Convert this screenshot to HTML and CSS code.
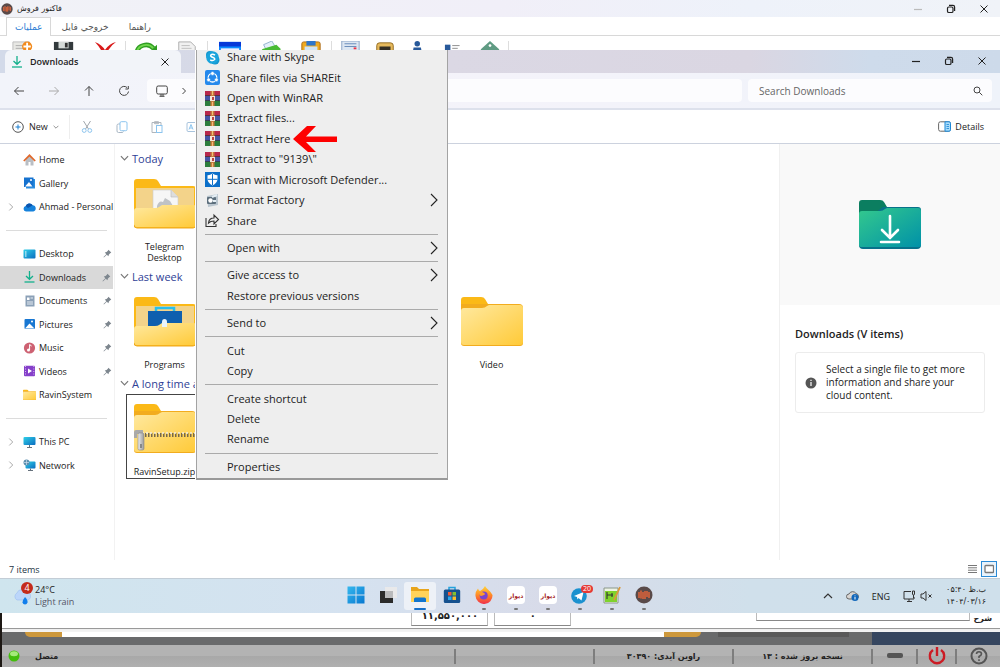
FILE: index.html
```html
<!DOCTYPE html>
<html lang="en">
<head>
<meta charset="utf-8">
<title>Downloads</title>
<link rel="stylesheet" href="styles.css">
</head>
<body>
<svg class="defs" width="0" height="0" aria-hidden="true">
  <defs>
    <linearGradient id="fold" x1="0" y1="0" x2="1" y2="1"><stop offset="0" stop-color="#ffe9a0"/><stop offset="1" stop-color="#ffca38"/></linearGradient>
    <linearGradient id="teal" x1="0" y1="0" x2="1" y2="1"><stop offset="0" stop-color="#34c98d"/><stop offset="1" stop-color="#0091a8"/></linearGradient>
    <linearGradient id="sky" x1="0" y1="0" x2="1" y2="1"><stop offset="0" stop-color="#2fd0e8"/><stop offset="1" stop-color="#0a6cc0"/></linearGradient>
    <linearGradient id="fox" x1="0" y1="0" x2="0" y2="1"><stop offset="0" stop-color="#ffd43a"/><stop offset=".5" stop-color="#ff8a26"/><stop offset="1" stop-color="#f0304c"/></linearGradient>
    <linearGradient id="win" x1="0" y1="0" x2="1" y2="1"><stop offset="0" stop-color="#35b8ee"/><stop offset="1" stop-color="#0878d0"/></linearGradient>
    <linearGradient id="steel" x1="0" y1="0" x2="1" y2="0"><stop offset="0" stop-color="#eee"/><stop offset="1" stop-color="#999"/></linearGradient>
  </defs>
  <symbol id="chev-r" viewBox="0 0 8 14"><path d="M1 1l6 6-6 6" fill="none" stroke="currentColor" stroke-width="1.1"/></symbol>
  <symbol id="chev-d" viewBox="0 0 10 6"><path d="M1 1l4 4 4-4" fill="none" stroke="currentColor" stroke-width="1.3"/></symbol>
  <symbol id="min" viewBox="0 0 10 10"><path d="M1 5.5h8" stroke="currentColor" stroke-width="1.2"/></symbol>
  <symbol id="restore" viewBox="0 0 10 10"><rect x="1.5" y="3" width="5.5" height="5.5" rx="1.3" fill="none" stroke="currentColor" stroke-width="1.2"/><path d="M3 1.4h4a1.6 1.6 0 0 1 1.6 1.6v4" fill="none" stroke="currentColor" stroke-width="1.2"/></symbol>
  <symbol id="close" viewBox="0 0 10 10"><path d="M1.5 1.5l7 7M8.500 1.500l-7 7" stroke="currentColor"/></symbol>
  <symbol id="folder" viewBox="0 0 62 50"><path d="M0 3Q0 0 3 0h17q3 0 4 2l3 5H0z" fill="#fbb917"/><path d="M0 7h58q4 0 4 4v35q0 3-3 3H3q-3 0-3-3z" fill="#f2ac1e"/><path d="M0 14q0-3 3-3h18q3 0 5-2l2-1h31q3 0 3 3v34q0 3-3 3H3q-3 0-3-3z" fill="url(#fold)"/></symbol>
  <symbol id="folder-open" viewBox="0 0 62 50"><path d="M0 3Q0 0 3 0h17q3 0 4 2l3 5h32q3 0 3 3v36q0 3-3 3H3q-3 0-3-3z" fill="#fbb917"/><path d="M2 9h58v30H2z" fill="#f3d38a"/></symbol>
  <symbol id="folder-front" viewBox="0 0 62 50"><path d="M0 32q0-3 3-3h18q3 0 4-1l3-2h32l2 1v18q0 3-3 3H3q-3 0-3-3z" fill="url(#fold)"/><path d="M0 46q0 3 3 3h56q3 0 3-3" fill="none" stroke="#eea820"/></symbol>
  <symbol id="down" viewBox="0 0 12 12"><path d="M6 0v8M2.500 5L6 8.300 9.500 5" fill="none" stroke="#14b08c" stroke-width="1.300"/><path d="M1 11h10" stroke="#14b08c" stroke-width="1.300"/></symbol>
  <symbol id="pin" viewBox="0 0 10 10"><path d="M6 .8L9.200 4 8 4.600 6.600 6 6 8 4.200 6.300 1 9.400.6 9l3.100-3.200L2 4l2-.6L5.400 2z" fill="#7d868e"/></symbol>
  <symbol id="rar" viewBox="0 0 15 15"><path d="M0 0h15v5H0z" fill="#b8284c"/><path d="M0 5h15v5H0z" fill="#4655a5"/><path d="M0 10h15v5H0z" fill="#2c7d3c"/><path d="M0 4.500h15M0 9.500h15" stroke="#333" stroke-width=".7"/><path d="M5.500 0h4v15h-4z" fill="#c87a3e"/><path d="M5 5h5v5H5z" fill="#f5e5d8"/><path d="M7 6h2v3H7z" fill="#b44"/><path d="M7.500 0v4M7.500 11v4" stroke="#f0c07a"/></symbol>
  <symbol id="ravin" viewBox="0 0 18 18"><circle cx="9" cy="9" r="8.500" fill="#594a49"/><path d="M4 6v6M6 4.500v8M8 6v7M10 5v8M12 5v6M14 6v6" stroke="#e0653a" stroke-width="1.500"/></symbol>
  <symbol id="mon" viewBox="0 0 13 12"><rect x=".5" y="1" width="12" height="8" rx="1" fill="url(#sky)"/><path d="M6 9h1v2h2v1H4v-1h2z" fill="#66717c"/></symbol>
</svg>

<header class="app-title">
  <svg class="app-logo" aria-hidden="true"><use href="#ravin"/></svg>
  <h1 class="fa">فاکتور فروش</h1>
  <div class="win-buttons">
    <button class="faint" aria-label="Minimize application"><svg><use href="#min"/></svg></button>
    <button aria-label="Restore application"><svg><use href="#restore"/></svg></button>
    <button aria-label="Close application"><svg><use href="#close"/></svg></button>
  </div>
</header>
<nav class="app-tabs fa">
  <button class="current">عملیات</button>
  <button>خروجي فايل</button>
  <button>راهنما</button>
</nav>
<div class="app-tools">
  <div class="tools tools-a">
    <button aria-label="New"><svg viewBox="0 0 24 24"><path d="M1 1h18v22H1z" fill="#e8e8e4" stroke="#bbb"/><path d="M4 5h8M4 8h8" stroke="#aaa"/><circle cx="16.500" cy="6" r="5.500" fill="#f28a1c"/><path d="M16.500 2v8M12.500 6h8" stroke="#fff" stroke-width="2"/></svg></button>
    <button aria-label="Save"><svg viewBox="0 0 24 24"><path d="M1 1h21v22H1z" fill="#333a3c"/><path d="M6 1h11v7H6z" fill="#d5dad8"/><path d="M13 2h3v5h-3z" fill="#333"/></svg></button>
    <button aria-label="Delete"><svg viewBox="0 0 24 24"><path d="M1 1q8 3 11 9l2 3-4 2Q7 7 1 1zM24 1Q14 3 8 17l4 1Q16 6 24 1z" fill="#d91a1a"/></svg></button>
  </div>
  <div class="tools tools-b">
    <button aria-label="Refresh"><svg viewBox="0 0 24 24"><path d="M2 13a10 9 0 0 1 18-5" fill="none" stroke="#2f9d22" stroke-width="5"/><path d="M2 13a10 9 0 0 1 18-5" fill="none" stroke="#70d84c" stroke-width="2"/><path d="M24 4v10H13z" fill="#2f9d22"/></svg></button>
    <button aria-label="Page"><svg viewBox="0 0 24 24"><path d="M3 1h13l5 5v17H3z" fill="#f1f1f1" stroke="#aaa"/><path d="M6 5h9M6 8h11" stroke="#bbb"/></svg></button>
  </div>
  <div class="tools tools-c">
    <button aria-label="Window"><svg viewBox="0 0 24 24"><path d="M0 1h24v22H0z" fill="#0b8aff"/><path d="M0 1h24v5H0z" fill="#0638d8"/><path d="M2 8h20v13H2z" fill="#eef"/></svg></button>
    <button aria-label="Print"><svg viewBox="0 0 24 24"><path d="M5 4l9-4 3 5-8 7z" fill="#e4effa" stroke="#8db0cb"/><path d="M3 9L19 4l5 5-12 8z" fill="#48bb35"/></svg></button>
    <button aria-label="Paste"><svg viewBox="0 0 24 24"><path d="M2 3q0-2 2-2h16q2 0 2 2v20H2z" fill="#efaa20" stroke="#a76612"/><path d="M7 0h10v5H7z" fill="#2e76cb"/><path d="M5 6h14v14H5z" fill="#cfe4f7"/></svg></button>
  </div>
  <div class="tools tools-d">
    <button aria-label="Calculator"><svg viewBox="0 0 24 24"><path d="M3 0h19v23H3z" fill="#dce6f2" stroke="#88a2c4"/><path d="M6 3h13M6 6h13" stroke="#6387b7"/><path d="M16 8h3" stroke="#e34" stroke-width="2"/></svg></button>
    <button aria-label="Device"><svg viewBox="0 0 24 24"><rect x="3" y="2" width="18" height="20" rx="3" fill="#e6b95c" stroke="#8e671e"/><path d="M6 6h12v13H6z" fill="#332d22"/></svg></button>
    <button aria-label="User"><svg viewBox="0 0 24 24"><circle cx="9" cy="3" r="3" fill="#28599a"/><path d="M5 7h8l3 16H2z" fill="#28599a"/></svg></button>
    <button aria-label="List"><svg viewBox="0 0 24 24"><path d="M1 4h6v6H1z" fill="#28599a"/><path d="M9 5h8M9 8h6" stroke="#888"/></svg></button>
    <button aria-label="Tag"><svg viewBox="0 0 24 24"><path d="M12 0l10 9v14H2V9z" fill="#5f9b83"/><circle cx="12" cy="5" r="1.500" fill="#fff"/></svg></button>
  </div>
</div>

<main class="explorer">
  <div class="tabbar">
    <div class="tab"><svg class="i12"><use href="#down"/></svg><span>Downloads</span><button aria-label="Close tab"><svg class="i10"><use href="#close"/></svg></button></div>
    <div class="win-buttons">
      <button aria-label="Minimize"><svg><use href="#min"/></svg></button>
      <button aria-label="Restore"><svg><use href="#restore"/></svg></button>
      <button aria-label="Close"><svg><use href="#close"/></svg></button>
    </div>
  </div>
  <div class="navbar">
    <div class="nav-buttons">
      <button aria-label="Back"><svg viewBox="0 0 12 12"><path d="M11 6H1.500M5.500 2l-4 4 4 4"/></svg></button>
      <button class="faint" aria-label="Forward"><svg viewBox="0 0 12 12"><path d="M1 6h9.500M6.500 2l4 4-4 4"/></svg></button>
      <button aria-label="Up"><svg viewBox="0 0 12 12"><path d="M6 11V1.500M2 5.500l4-4 4 4"/></svg></button>
      <button aria-label="Reload"><svg viewBox="0 0 12 12"><path d="M10.500 6.500a4.500 4.500 0 1 1-1.500-4M10.300 1v3H7.400"/></svg></button>
    </div>
    <div class="address">
      <svg viewBox="0 0 12 12" class="i12"><rect x=".7" y="1" width="10.600" height="8" rx="1.500"/><path d="M5 9v2M7 9v2M3.500 11.300h5"/></svg>
      <svg viewBox="0 0 6 8" class="sm"><path d="M1.500 1l3 3-3 3"/></svg>
    </div>
    <label class="search"><input type="text" placeholder="Search Downloads" aria-label="Search Downloads"><svg viewBox="0 0 10 10" class="i10"><circle cx="4" cy="4" r="3"/><path d="M6.300 6.300L9.300 9.300"/></svg></label>
  </div>
  <div class="commands">
    <button class="new"><svg viewBox="0 0 12 12" class="i12"><circle cx="6" cy="6" r="5.300" fill="none" stroke="#555"/><path d="M6 3.500v5M3.500 6h5" stroke="#1b7fd0"/></svg>New<svg class="tiny"><use href="#chev-d"/></svg></button>
    <div class="edit">
      <button aria-label="Cut"><svg viewBox="0 0 12 12"><path d="M2.500 0l5 8M9.500 0l-5 8" stroke="#a0a6ac"/><circle cx="3.200" cy="9.500" r="1.900"/><circle cx="8.800" cy="9.500" r="1.900"/></svg></button>
      <button aria-label="Copy"><svg viewBox="0 0 12 12"><path d="M4 3H2.500Q1 3 1 4.500V10q0 1.500 1.500 1.500H6q1 0 1.500-1" stroke="#a9b6c4"/><rect x="4" y=".7" width="7" height="9" rx="1.300"/></svg></button>
      <button aria-label="Paste"><svg viewBox="0 0 12 12"><path d="M5 11.500H1V1.500h9V4" stroke="#b0b6bc"/><path d="M3.500.7h4v2h-4z" stroke="#b0b6bc"/><rect x="5.500" y="4.500" width="5.500" height="7"/></svg></button>
      <button aria-label="Rename"><svg viewBox="0 0 12 12"><path d="M9 1.500H2Q1 1.500 1 3v6q0 1.500 1 1.500h7" stroke="#a9c4dd"/><path d="M3 8.500l2-5 2 5M4 7h2"/></svg></button>
    </div>
    <button class="details-btn"><svg viewBox="0 0 13 11"><rect x=".6" y=".8" width="11.800" height="9.400" rx="1.800" fill="none" stroke="#666"/><path d="M7 .8h4q1.500 0 1.500 1.500v6.400q0 1.500-1.500 1.500H7z" fill="#a9dcfa" stroke="#1b87d6"/><path d="M8.500 3.500h2.500M8.500 5.500h2.500M8.500 7.500h2.500" stroke="#1b87d6" stroke-width=".8"/></svg>Details</button>
  </div>

  <div class="panes">
    <nav class="side">
      <ul>
        <li><a href="#home"><svg viewBox="0 0 13 12"><path d="M2.500 5.500v6H5.500V8h2v3.500h3v-6L6.500 2z" fill="#b9bec4"/><path d="M.8 7L6.500 1.300 12.200 7" fill="none" stroke="#e0692c" stroke-width="1.700"/></svg>Home</a></li>
        <li><a href="#gallery"><svg viewBox="0 0 13 12"><path d="M3 2h9v9.500H3z" fill="#2b8ee0"/><path d="M1 .5h9.500v9.500H1z" fill="#1672cf"/><path d="M2 9.500l4-4.500 3.500 4.500z" fill="#fff"/><circle cx="8" cy="3" r="1" fill="#fff"/></svg>Gallery</a></li>
        <li><a href="#personal"><svg class="exp"><use href="#chev-r"/></svg><svg viewBox="0 0 13 12"><path d="M3 10.500a2.800 2.800 0 0 1-.3-5.500 4 4 0 0 1 7-.8 3.200 3.200 0 0 1 .6 6.300z" fill="#1682dc"/><path d="M2.700 5a4 4 0 0 1 7-.8L5 7z" fill="#0b55ae"/></svg>Ahmad - Personal</a></li>
        <li class="rule"></li>
        <li><a href="#desktop"><svg viewBox="0 0 13 12"><rect x=".5" y="1.500" width="12" height="9" rx="1" fill="url(#sky)"/><path d="M2 4h1.500M2 6h1.500M2 8h1.500" stroke="#fff"/></svg>Desktop<svg class="pin"><use href="#pin"/></svg></a></li>
        <li class="on"><a href="#downloads"><svg><use href="#down"/></svg>Downloads<svg class="pin"><use href="#pin"/></svg></a></li>
        <li><a href="#documents"><svg viewBox="0 0 13 12"><path d="M2.500.5h9v11h-9z" fill="#8ba0b7"/><path d="M4 2.500h2.500V5H4z" fill="#fff"/><path d="M7.500 3H10M4 7h6M4 9h6" stroke="#e6edf4"/></svg>Documents<svg class="pin"><use href="#pin"/></svg></a></li>
        <li><a href="#pictures"><svg viewBox="0 0 13 12"><rect x="1.500" y="1" width="10.500" height="10" rx="1" fill="#1877d2"/><path d="M2 10.500L6.500 5.500l5 5z" fill="#fff"/><circle cx="9" cy="3.500" r="1" fill="#fff"/></svg>Pictures<svg class="pin"><use href="#pin"/></svg></a></li>
        <li><a href="#music"><svg viewBox="0 0 13 12"><circle cx="6.500" cy="6" r="5.600" fill="#cd6172"/><circle cx="5.500" cy="8" r="1.500" fill="#fff"/><path d="M6.600 8V2.500l2 1.500" fill="none" stroke="#fff"/></svg>Music<svg class="pin"><use href="#pin"/></svg></a></li>
        <li><a href="#videos"><svg viewBox="0 0 13 12"><rect x="1" y=".8" width="11" height="10.500" rx="1" fill="#8540c9"/><path d="M5 3.500v5L9 6z" fill="#fff"/><path d="M2.500 1v10M10.800 1v10" stroke="#d7b7f2" stroke-dasharray="1 1.500"/></svg>Videos<svg class="pin"><use href="#pin"/></svg></a></li>
        <li><a href="#ravinsystem"><svg><use href="#folder"/></svg>RavinSystem</a></li>
        <li class="rule"></li>
        <li><a href="#thispc"><svg class="exp"><use href="#chev-r"/></svg><svg><use href="#mon"/></svg>This PC</a></li>
        <li><a href="#network"><svg class="exp"><use href="#chev-r"/></svg><svg viewBox="0 0 13 12"><rect x="2.500" y="2.500" width="10" height="7" rx="1" fill="url(#sky)"/><path d="M7 9.500h1v1.500h2v1H5v-1h2z" fill="#66717c"/><circle cx="3.500" cy="3.500" r="3" fill="#5c8fae"/><path d="M1 3.500h5M3.500 1v5" stroke="#cde" stroke-width=".7"/></svg>Network</a></li>
      </ul>
    </nav>

    <section class="files">
      <h2><svg class="tiny"><use href="#chev-d"/></svg>Today</h2>
      <div class="grid">
        <figure><svg><use href="#folder-open"/><path d="M19 11h18l7 7v14H19z" fill="#f6f6f6" stroke="#ccc" stroke-width=".6"/><path d="M37 11v7h7" fill="#ddd" stroke="#bbb" stroke-width=".6"/><path d="M23 27q2-6 6-4l2-4 5 3 3 5-5 3H23z" fill="#bfc2c5"/><use href="#folder-front"/></svg><figcaption>Telegram<br>Desktop</figcaption></figure>
      </div>
      <h2><svg class="tiny"><use href="#chev-d"/></svg>Last week</h2>
      <div class="grid">
        <figure><svg><use href="#folder-open"/><path d="M22 15v-4h18v4" fill="none" stroke="#28c0ee" stroke-width="2.500"/><path d="M14 14h34v18H14z" fill="#0f5fae"/><use href="#folder-front"/><path d="M28 30v-5q0-3 2.500-3t2.500 3v5z" fill="#eaf4fb"/></svg><figcaption>Programs</figcaption></figure>
        <figure class="fourth"><svg><use href="#folder"/></svg><figcaption>Video</figcaption></figure>
      </div>
      <h2><svg class="tiny"><use href="#chev-d"/></svg>A long time ago</h2>
      <div class="grid">
        <figure class="picked"><svg><use href="#folder"/><path d="M8 31h54" stroke="#75684c" stroke-width="4" stroke-dasharray="1.500 1.500"/><path d="M8 29h54" stroke="#f3eee0" stroke-width="1.500" stroke-dasharray="2 2"/><path d="M0 28q0-2 2-2h7v6H6v-2H3v4H0z" fill="#aaa"/><rect x="4" y="29" width="6" height="17" rx="1.500" fill="url(#steel)" stroke="#888" stroke-width=".6"/><path d="M6 40h2v4H6z" fill="#888"/></svg><figcaption>RavinSetup.zip</figcaption></figure>
      </div>
    </section>

    <aside class="details">
      <div class="preview"><svg viewBox="0 0 62 50"><path d="M0 3Q0 0 3 0h18q3 0 4 2l3 5v10H0z" fill="#0b7e60"/><path d="M24 7h35q3 0 3 3v35q0 4-4 4H4q-4 0-4-4V25z" fill="#08718a"/><path d="M0 14q0-3 3-3h18q3 0 5-2l2-1h31q3 0 3 3v34q0 2-3 2H3q-3 0-3-2z" fill="url(#teal)"/><path d="M31 16v22M23 30l8 8 8-8M22 42h18" fill="none" stroke="#fff" stroke-width="2.600" stroke-linecap="round"/></svg></div>
      <h2>Downloads (V items)</h2>
      <div class="note"><svg viewBox="0 0 12 12"><circle cx="6" cy="6" r="5.500" fill="#555"/><path d="M6 5v4M6 2.800v1.300" stroke="#fff" stroke-width="1.200"/></svg><p>Select a single file to get more information and share your cloud content.</p></div>
    </aside>
  </div>

  <div class="status">
    <span>7 items</span>
    <div class="views">
      <button aria-label="List view"><svg viewBox="0 0 10 10"><path d="M1 1.500h9M1 3.800h9M1 6.200h9M1 8.500h9" stroke="#777"/></svg></button>
      <button class="sel" aria-label="Thumbnail view"><svg viewBox="0 0 10 10"><rect x="1" y="1.500" width="8.500" height="7" rx=".8" fill="#fff" stroke="#777" stroke-width="1.300"/></svg></button>
    </div>
  </div>

  <div class="menu">
    <ul>
      <li><button><svg viewBox="0 0 15 15"><circle cx="5" cy="5" r="4" fill="#1597cf"/><circle cx="10" cy="10" r="4.500" fill="#1597cf"/><circle cx="7.500" cy="7.500" r="6.300" fill="#1aa4dc"/><path d="M10 5.200Q7.500 3.500 5.800 5q-.7 1.500 1.700 2.200t2.200 2.200Q8 11.500 5.200 9.800" fill="none" stroke="#fff" stroke-width="1.500"/></svg>Share with Skype</button></li>
      <li><button><svg viewBox="0 0 15 15"><rect width="15" height="15" rx="2" fill="#2589ec"/><circle cx="7.500" cy="7.700" r="4.300" fill="none" stroke="#fff" stroke-width="1.300"/><g fill="#fff" stroke="#2589ec" stroke-width=".6"><circle cx="7.500" cy="3.500" r="1.900"/><circle cx="3.600" cy="9.800" r="1.900"/><circle cx="11.400" cy="9.800" r="1.900"/></g></svg>Share files via SHAREit</button></li>
      <li><button><svg><use href="#rar"/></svg>Open with WinRAR</button></li>
      <li><button><svg><use href="#rar"/></svg>Extract files...</button></li>
      <li><button><svg><use href="#rar"/></svg>Extract Here</button><svg class="arrow" viewBox="0 0 44 26"><path d="M0 13L14 0h9L13 10.500h31v5.500H13L23 26h-8z" fill="#fe0000"/></svg></li>
      <li><button><svg><use href="#rar"/></svg>Extract to "9139\"</button></li>
      <li><button><svg viewBox="0 0 15 15"><path d="M0 0h15v15H0z" fill="#0c6fc9"/><path d="M7.500 1.500q2.500 2 5 1.800v4q-.5 4-5 6.200-4.500-2.200-5-6.200v-4q2.500.2 5-1.800z" fill="#fff"/><path d="M7.500 2v11M2.500 7.300h10" stroke="#0c6fc9"/></svg>Scan with Microsoft Defender...</button></li>
      <li><button><svg viewBox="0 0 15 15"><path d="M2 3l11-2v11l-10 2z" fill="#b9c5ce"/><rect x="2" y="4" width="9" height="7" rx="1" fill="#5c6e7c"/><circle cx="5.500" cy="7.500" r="2.200" fill="#fff"/><path d="M7 4l5-2M8 8h3" stroke="#e4edf3" stroke-width="2"/></svg>Format Factory</button><svg class="more"><use href="#chev-r"/></svg></li>
      <li><button><svg viewBox="0 0 15 15"><path d="M1 5v8.500h10V11M3.500 10Q4 5 9 5V2l4.500 4.500L9 11V8Q5.500 8 3.500 10z" fill="none" stroke="#333" stroke-width="1.100"/></svg>Share</button></li>
      <li class="sep"></li>
      <li><button>Open with</button><svg class="more"><use href="#chev-r"/></svg></li>
      <li class="sep"></li>
      <li><button>Give access to</button><svg class="more"><use href="#chev-r"/></svg></li>
      <li><button>Restore previous versions</button></li>
      <li class="sep"></li>
      <li><button>Send to</button><svg class="more"><use href="#chev-r"/></svg></li>
      <li class="sep"></li>
      <li><button>Cut</button></li>
      <li><button>Copy</button></li>
      <li class="sep"></li>
      <li><button>Create shortcut</button></li>
      <li><button>Delete</button></li>
      <li><button>Rename</button></li>
      <li class="sep"></li>
      <li><button>Properties</button></li>
    </ul>
  </div>
</main>

<footer class="taskbar">
  <div class="weather">
    <div class="cloud"><svg viewBox="0 0 18 18"><path d="M4 13a4 4 0 0 1 0-7 5 5 0 0 1 9-1 4 4 0 0 1 1 8z" fill="#bcd6fa" stroke="#9abdf0" stroke-width=".6"/><path d="M12 10q3 3 2.500 5.500a2.600 2.600 0 0 1-5 0Q9.500 13 12 10z" fill="#127fec"/></svg><span class="badge">4</span></div>
    <div><div>24°C</div><div class="dim">Light rain</div></div>
  </div>
  <div class="pins">
    <button aria-label="Start"><svg viewBox="0 0 18 18"><path d="M.5.5h8v8h-8zM9.500.5h8v8h-8zM.5 9.500h8v8h-8zM9.500 9.500h8v8h-8z" fill="url(#win)"/></svg></button>
    <button aria-label="Task view"><svg viewBox="0 0 18 18"><path d="M1 5h13v12H1z" fill="#2b2b2b"/><path d="M6 1h12v11H6z" fill="#e9e9ea"/><path d="M6 5h8v7H6z" fill="#b9babc"/></svg></button>
    <button class="active" aria-label="File Explorer"><svg viewBox="0 0 18 18"><path d="M0 1h6l2 2h10v13H0z" fill="#e8a51c"/><path d="M0 5h18v11H0z" fill="#ffd35a"/><path d="M3 16v-3q0-1.500 1.500-1.500h9q1.500 0 1.500 1.500v3z" fill="#1175ce"/></svg><i></i></button>
    <button aria-label="Store"><svg viewBox="0 0 18 18"><path d="M6 4V1.500h6V4" fill="none" stroke="#25a2dd" stroke-width="1.500"/><rect x=".8" y="3.500" width="16.400" height="13.500" rx="1.500" fill="#15518e"/><path d="M5 6h3.500v3.500H5z" fill="#f05a36"/><path d="M9.500 6H13v3.500H9.500z" fill="#83be2f"/><path d="M5 10.500h3.500V14H5z" fill="#2aa7ed"/><path d="M9.500 10.500H13V14H9.500z" fill="#fbbc2a"/></svg></button>
    <button aria-label="Firefox"><svg viewBox="0 0 18 18"><path d="M10 0q1 2 3.500 4T17.500 9a8.500 8.500 0 0 1-17 1Q0 6 3 2.500q.5 2 2 2.500Q8 4 10 0z" fill="url(#fox)"/><circle cx="8.700" cy="9.500" r="4" fill="#7b45cf"/><path d="M4 7q3-2 5 0 2 1 0 2T5.500 10" fill="#ff9d2b"/></svg><i></i></button>
    <button aria-label="Divar"><span class="divar fa">دیوار</span><i></i></button>
    <button aria-label="Divar second window"><span class="divar fa">دیوار</span><i></i></button>
    <button aria-label="Telegram"><svg viewBox="0 0 18 18"><circle cx="8" cy="10" r="7.800" fill="#1b91cf"/><path d="M3 10l9.500-4-2 8.500-3-2.500-1 1.500L6 11z" fill="#fff"/></svg><span class="count">20</span><i></i></button>
    <button aria-label="Notepad++"><svg viewBox="0 0 18 18"><path d="M1 2h14v15H1z" fill="#eef3e5" stroke="#8a978a"/><path d="M2 5h12v11H2z" fill="#7ed32c"/><path d="M4 6v7M4 9h6M9 7v4" stroke="#333" stroke-width="1.100"/><path d="M17 1l-5 11-1 2" stroke="#d99a3a" stroke-width="1.800" fill="none"/></svg><i></i></button>
    <button aria-label="Ravin"><svg><use href="#ravin"/></svg><i></i></button>
  </div>
  <div class="tray">
    <svg class="up" viewBox="0 0 10 6"><path d="M1 5l4-4 4 4" fill="none" stroke="#333" stroke-width="1.200"/></svg>
    <svg viewBox="0 0 13 12"><path d="M3 9a2.500 2.500 0 0 1 0-5 4 4 0 0 1 7-.5A3 3 0 0 1 11 9z" fill="#d8d5d2" stroke="#666"/><circle cx="9" cy="7.500" r="3.500" fill="#1267ba"/><path d="M9 7v2.500M9 5.500v.8" stroke="#fff"/></svg>
    <span>ENG</span>
    <div class="net"><svg viewBox="0 0 13 12"><path d="M8 1.500H1v7.500h10V7M4 11.500h5M6 9v2.500M9.500 1v3q0 1 1 1t1-1V1zM10.500 5v3" fill="none" stroke="#333"/></svg>
    <svg viewBox="0 0 13 12"><path d="M1 4h2l3-2.500v9L3 8H1zM8.500 4.500l3 3M11.500 4.500l-3 3" fill="none" stroke="#333"/></svg></div>
    <div class="clock fa"><div>۰۵:۴۰ ب.ظ</div><div>۱۴۰۴/۰۳/۱۶</div></div>
  </div>
</footer>

<section class="form fa">
  <div class="amounts"><input type="text" aria-label="جمع" value="۱۱,۵۵۰,۰۰۰" readonly><input type="text" aria-label="تخفیف" value="۰" readonly></div>
  <label class="desc"><input type="text"><span>شرح</span></label>
</section>
<div class="band"><span class="gold left"></span><span class="white"></span><span class="gold"></span><span class="shade"></span><span class="navy"></span></div>
<footer class="app-status fa">
  <div class="conn"><svg viewBox="0 0 12 12"><circle cx="6" cy="6" r="5.500" fill="#43bd0c"/><ellipse cx="6" cy="3.800" rx="4" ry="2.500" fill="#a5ea7a"/></svg><span>متصل</span></div>
  <div class="cell"></div>
  <div class="cell" dir="rtl">راوین آیدی: ۳۰۳۹۰</div>
  <div class="cell" dir="rtl">نسخه بروز شده : ۱۳</div>
  <div class="cell keys"><button aria-label="Minimize"><svg viewBox="0 0 18 18"><rect x="1" y="6" width="16" height="5" rx="2" fill="#555"/></svg></button></div>
  <div class="cell keys"><button aria-label="Power"><svg viewBox="0 0 18 18"><path d="M5 3a7.200 7.200 0 1 0 8 0M9 0v9" fill="none" stroke="#cc1b24" stroke-width="2.400"/></svg></button></div>
  <div class="cell keys"><button aria-label="Help"><svg viewBox="0 0 18 18"><circle cx="9" cy="9" r="7.500" fill="none" stroke="#555" stroke-width="2"/><path d="M6.500 7q0-2.300 2.500-2.300T11.500 7Q11.500 8.300 9 9.500V11M9 12.300v1.700" fill="none" stroke="#555" stroke-width="1.600"/></svg></button></div>
</footer>
</body>
</html>
```
FILE: styles.css
```css
* { box-sizing: border-box; }
body, h1, h2, ul, p, figure { margin: 0; padding: 0; }
ul { list-style: none; }
body {
  display: flex;
  flex-direction: column;
  min-height: 100vh;
  overflow: hidden;
  background: #fff;
  color: #222;
  font-family: "Open Sans", "Noto Sans", "DejaVu Sans", sans-serif;
  font-size: 9px;
}
button, input { font: inherit; color: inherit; border: 0; padding: 0; margin: 0; background: none; }
button { display: inline-flex; align-items: center; justify-content: center; }
a { color: inherit; text-decoration: none; }
svg { flex: none; display: block; }
.defs { position: absolute; }
.fa { font-family: "DejaVu Sans", sans-serif; }
.i12 { width: 12px; height: 12px; }
.i10 { width: 10px; height: 10px; }
.tiny { width: 9px; height: 6px; color: #777; }

/* Host application */
.app-title { display: flex; align-items: center; height: 17px; padding-left: 1px; background: linear-gradient(90deg, #f1f2f7, #f1eff8 50%, #eef2fa 75%, #f0f3f8); }
.app-title h1 { margin-left: 4px; font-size: 8px; font-weight: 400; }
.app-logo { width: 12px; height: 12px; }
.win-buttons { display: flex; margin-left: auto; }
.win-buttons button { width: 33px; height: 15px; color: #222; }
.win-buttons svg { width: 10px; height: 10px; }
.win-buttons .faint { color: #bbb; }
.app-tabs { display: flex; height: 19px; padding-left: 6px; border-bottom: 1px solid #d8d8d8; color: #555; }
.app-tabs button { height: 19px; padding: 0 10px; }
.app-tabs .current { border: 1px solid #d8d8d8; border-bottom: 0; background: #fff; color: #2b7cd3; padding: 0 8px; }
.app-tools { display: flex; height: 14px; padding-top: 5px; overflow: hidden; }
.tools { display: flex; justify-content: space-around; align-items: flex-start; border-right: 1px solid #ddd; height: 24px; }
.tools svg { width: 22px; height: 22px; }
.tools-a { width: 126px; padding-left: 3px; }
.tools-b { width: 82px; }
.tools-c { width: 124px; padding-left: 2px; }
.tools-d { width: 177px; }

/* Explorer window */
.explorer { position: relative; flex: 1; display: flex; flex-direction: column; }
.tabbar { display: flex; height: 23px; padding: 0 2px 0 5px; background: linear-gradient(90deg, #d3dae9, #dbd8e4 45%, #dad6e2 75%, #cedbeb 87%, #cddaea); }
.tabbar .win-buttons button { height: 21px; }
.tab { display: flex; align-items: center; width: 176px; padding: 0 11px 0 6px; border-radius: 6px 6px 0 0; background: #f2f4f9; font-weight: 600; }
.tab span { flex: 1; margin-left: 7px; }
.navbar { display: flex; align-items: center; gap: 6px; height: 37px; padding: 0 8px 0 0; background: linear-gradient(90deg, #f2f4fa, #f4f3fa 50%, #eff3fa); border-bottom: 2px solid #dde1ec; }
.navbar svg { fill: none; stroke: #444; }
.nav-buttons { display: flex; width: 141px; padding-left: 1px; }
.nav-buttons button { width: 35px; }
.nav-buttons svg { width: 12px; height: 12px; }
.nav-buttons .faint svg { stroke: #aaa; }
.address, .search { height: 23px; border-radius: 4px; background: #fcfcfe; display: flex; align-items: center; }
.address { flex: 1; padding-left: 9px; gap: 13px; }
.address .sm { width: 6px; height: 8px; }
.search { width: 244px; padding: 0 9px 0 11px; }
.search input { flex: 1; min-width: 0; font-size: 10px; outline: 0; }
.search input::placeholder { color: #666; opacity: 1; }
.commands { display: flex; align-items: center; height: 34px; padding: 0 16px 0 12px; border-bottom: 1px solid #ccd2de; }
.commands button { gap: 4px; }
.commands .new { gap: 5px; padding-right: 10px; height: 24px; border-right: 1px solid #eee; }
.new .tiny { width: 6px; height: 4px; }
.edit { display: flex; }
.edit button { width: 35px; }
.edit svg { width: 12px; height: 12px; fill: none; stroke: #8cc4ee; }
.details-btn { margin-left: auto; }
.details-btn svg { width: 13px; height: 11px; }

.panes { flex: 1; display: flex; }
.side { width: 115px; padding-top: 4px; border-right: 1px solid #f2f2f2; }
.side ul { display: flex; flex-direction: column; height: 329px; }
.side li { flex: 1; display: flex; padding-left: 1px; }
.side a { flex: 1; display: flex; align-items: center; gap: 3px; padding: 0 2px 0 22px; position: relative; white-space: nowrap; }
.side a svg { width: 13px; height: 12px; }
.side .on { background: #d9d9d9; margin-right: 1px; }
.side .rule { margin: 0 7px 0 6px; align-items: center; padding: 0; }
.side .rule::before { content: ""; flex: 1; border-top: 1px solid #dcdcdc; }
.side a .pin { width: 9px; height: 9px; margin-left: auto; }
.side a .exp { position: absolute; left: 7px; width: 6px; height: 8px; color: #777; }

.files { flex: 1; padding: 4px 0 0 5px; overflow: hidden; }
.files h2 { display: flex; align-items: center; gap: 3px; height: 20px; font-size: 11px; font-weight: 400; color: #2f3f96; }
.files .grid { display: grid; grid-template-columns: repeat(5, 77px); column-gap: 32px; padding: 1px 6px; }
.files figure { display: flex; flex-direction: column; align-items: center; gap: 12px; padding: 9px 0 1px; border: 1px solid transparent; }
.files figure svg { width: 62px; height: 50px; }
.files figcaption { line-height: 11px; text-align: center; white-space: nowrap; }
.files .fourth { grid-column: 4; }
.files .picked { border-color: #444; }

.details { width: 221px; border-left: 1px solid #f0f0f0; }
.preview { display: flex; align-items: center; justify-content: center; height: 161px; background: #f9f9f9; }
.preview svg { width: 64px; height: 50px; }
.details h2 { margin: 20px 15px 10px; font-size: 11px; line-height: 17px; font-weight: 600; }
.note { display: flex; align-items: center; gap: 9px; margin: 0 15px; padding: 10px 9px; border: 1px solid #ececec; border-radius: 3px; }
.note svg { width: 12px; height: 12px; }
.note p { font-size: 10px; line-height: 13px; }
.status { display: flex; align-items: center; height: 18px; padding: 0 3px 0 9px; color: #234; }
.views { display: flex; gap: 1px; margin-left: auto; }
.views button { width: 16px; height: 16px; }
.views .sel { border: 1px solid #2a8ad6; background: #e8f3fc; }
.views svg { width: 10px; height: 10px; }

/* Context menu */
.menu { position: absolute; left: 196px; top: 0; width: 252px; height: 430px; overflow: hidden; border: 1px solid #a3a3a3; border-top: 0; border-bottom: 2px solid #999; background: #eee; box-shadow: -1px 0 #fff; }
.menu ul { display: flex; flex-direction: column; height: 430px; margin-top: -3px; }
.menu li { flex: 1; position: relative; display: flex; align-items: center; padding: 0 9px 0 8px; }
.menu button { flex: 1; position: relative; justify-content: flex-start; padding-left: 22px; font-size: 11px; line-height: 16px; white-space: nowrap; color: #1c1c1c; }
.menu button svg { position: absolute; left: 0; width: 15px; height: 15px; }
.menu .sep { flex: 0 0 7px; }
.menu .sep::before { content: ""; flex: 1; border-top: 1px solid #aaa; }
.menu .more { width: 8px; height: 14px; }
.menu .arrow { position: absolute; left: 96px; width: 44px; height: 26px; }

/* Taskbar */
.taskbar { display: grid; grid-template-columns: 1fr auto 1fr; height: 35px; border-top: 1px solid #c3cdd6; background: linear-gradient(90deg, #cfe5ee, #d5e2f0 35%, #d8dbe9 55%, #d0e0eb 75%, #cfe0eb); }
.weather { display: flex; align-items: center; gap: 4px; padding-left: 13px; line-height: 12px; }
.cloud { position: relative; }
.cloud svg { width: 18px; height: 18px; }
.dim { color: #556; }
.badge { position: absolute; left: 8px; top: -5px; width: 12px; height: 12px; border-radius: 50%; background: #c42b1c; color: #fff; text-align: center; }
.pins { display: flex; align-items: center; }
.pins button { position: relative; width: 32px; height: 28px; border-radius: 3px; padding-bottom: 2px; }
.pins svg { width: 18px; height: 18px; }
.pins .active { background: #edf1f7; }
.pins i { position: absolute; bottom: 0; left: 14px; width: 4px; height: 2px; border-radius: 1px; background: #777; }
.pins .active i { left: 10px; width: 12px; background: #1670c8; }
.divar { display: flex; align-items: center; justify-content: center; width: 18px; height: 18px; border-radius: 4px; background: #fff; color: #a62626; font-size: 6px; font-weight: 700; }
.count { position: absolute; right: 3px; top: 3px; padding: 0 2px; border-radius: 4px; background: #e53935; color: #fff; font-size: 7px; line-height: 8px; }
.tray { display: flex; align-items: center; justify-content: flex-end; gap: 13px; padding-right: 14px; }
.tray svg { width: 13px; height: 12px; }
.tray .up { width: 10px; height: 6px; }
.net { display: flex; gap: 4px; }
.clock { text-align: right; font-size: 8px; line-height: 12px; white-space: nowrap; }

/* Host application, lower edge */
.form { display: flex; justify-content: flex-end; height: 19px; border-left: 2px solid #1d1814; padding: 0 8px 0 3px; overflow: hidden; background: linear-gradient(#fff 15px, #999 15px, #999 16px, #eee 16px, #f4f4f4); font-weight: 600; }
.form input { height: 22px; border: 1px solid #bbb; border-bottom-color: #888; margin-top: -9px; text-align: center; background: #fff; }
.amounts { display: flex; gap: 6px; margin-right: 185px; font-size: 10px; }
.amounts input { width: 77px; }
.desc { display: flex; gap: 3px; height: 13px; line-height: 12px; font-size: 8px; }
.desc input { width: 214px; height: 17px; }
.band { display: flex; height: 13px; padding-left: 25px; border-left: 2px solid #1d1814; background: #696a6b; }
.band span { height: 5px; }
.band .gold { width: 37px; background: #cd983c; border-radius: 0 0 5px 0; }
.band .gold.left { margin-left: -2px; border-radius: 0 0 0 5px; }
.band .white { flex: 1; background: #fff; }
.band .shade { width: 131px; margin: 0 23px 0 17px; background: #595959; }
.band .navy { width: 128px; height: 13px; background: #36465f; }
.app-status { display: flex; align-items: center; height: 22px; border-left: 2px solid #1d1814; background: linear-gradient(#b3b3b3 50%, #a8a8a8 50%, #b0b0b0); font-size: 8px; font-weight: 700; }
.conn { display: flex; align-items: center; gap: 15px; flex: 1; padding-left: 6px; }
.conn svg { width: 12px; height: 12px; }
.cell { display: flex; align-items: center; justify-content: center; width: 139px; height: 15px; border-left: 2px solid #7d7d7d; white-space: nowrap; }
.cell.keys { width: 45px; }
.cell.keys + .keys { width: 39px; }
.cell.keys + .keys + .keys { width: 45px; }
.keys svg { width: 18px; height: 18px; }
```
